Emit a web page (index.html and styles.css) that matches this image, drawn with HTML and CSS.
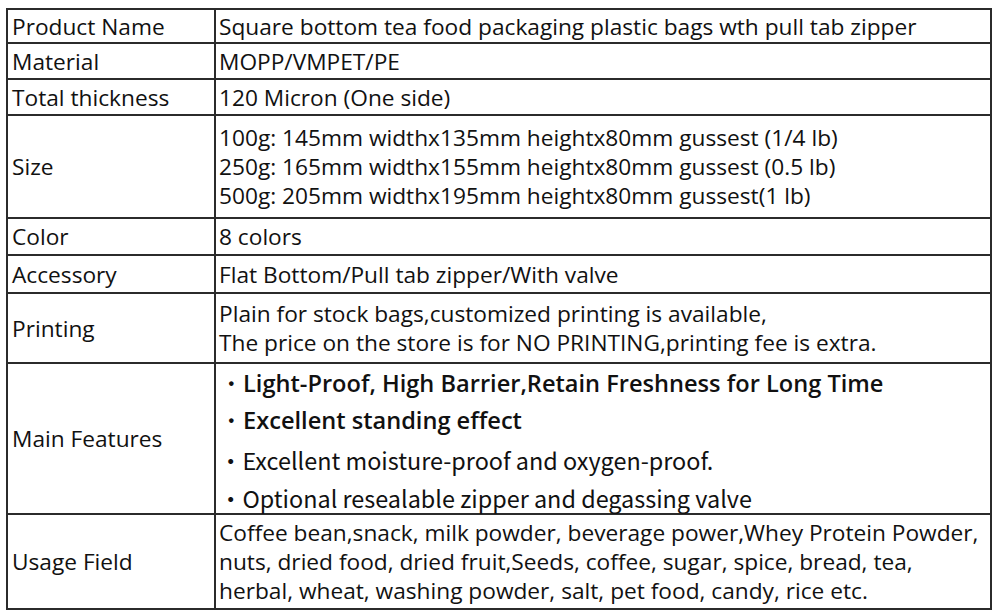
FILE: index.html
```html
<!DOCTYPE html>
<html>
<head>
<meta charset="utf-8">
<link rel="stylesheet" href="styles.css">
</head>
<body>
<div class="wrap">
<table class="spec">
  <colgroup><col class="c1"><col class="c2"></colgroup>
  <tr class="r-name"><td>Product Name</td><td>Square bottom tea food packaging plastic bags wth pull tab zipper</td></tr>
  <tr class="r-mat"><td>Material</td><td>MOPP/VMPET/PE</td></tr>
  <tr class="r-thk"><td>Total thickness</td><td>120 Micron (One side)</td></tr>
  <tr class="r-size"><td>Size</td><td class="multi">100g: 145mm widthx135mm heightx80mm gussest (1/4 lb)<br>250g: 165mm widthx155mm heightx80mm gussest (0.5 lb)<br>500g: 205mm widthx195mm heightx80mm gussest(1 lb)</td></tr>
  <tr class="r-col"><td>Color</td><td>8 colors</td></tr>
  <tr class="r-acc"><td>Accessory</td><td>Flat Bottom/Pull tab zipper/With valve</td></tr>
  <tr class="r-prt"><td>Printing</td><td class="multi">Plain for stock bags,customized printing is available,<br>The price on the store is for NO PRINTING,printing fee is extra.</td></tr>
  <tr class="r-feat"><td>Main Features</td><td class="feats">
    <div class="f bold f1">・Light-Proof, High Barrier,Retain Freshness for Long Time</div>
    <div class="f bold f2">・Excellent standing effect</div>
    <div class="f jp f3">・Excellent moisture-proof and oxygen-proof.</div>
    <div class="f jp f4">・Optional resealable zipper and degassing valve</div>
  </td></tr>
  <tr class="r-use"><td>Usage Field</td><td class="multi">Coffee bean,snack, milk powder, beverage power,Whey Protein Powder,<br>nuts, dried food, dried fruit,Seeds, coffee, sugar, spice, bread, tea,<br>herbal, wheat, washing powder, salt, pet food, candy, rice etc.</td></tr>
</table>
</div>
</body>
</html>
```
FILE: styles.css
```css
html, body { margin: 0; padding: 0; background: #fff; }
.wrap { padding: 8px 0 0 6px; }
.spec {
  border-collapse: collapse;
  width: 986px;
  table-layout: fixed;
  font-family: "Open Sans", "Noto Sans", sans-serif;
  font-size: 22.7px;
  font-weight: 500;
  color: #111;
}
.c1 { width: 208px; }
.spec td {
  border: 2px solid #2b2b2b;
  padding: 0 3px;
  vertical-align: middle;
  line-height: 29px;
  white-space: nowrap;
}
.spec td:first-child { padding-left: 4px; }
.r-name { height: 34px; }
.r-mat { height: 36px; }
.r-thk { height: 36px; }
.r-size { height: 103px; }
.r-col { height: 37px; }
.r-acc { height: 38px; }
.r-prt { height: 70px; }
.r-feat { height: 151px; }
.r-use { height: 95px; }
.spec td.feats { vertical-align: top; padding-top: 6px; padding-bottom: 2px; }
.f { line-height: 26px; font-size: 23.4px; }
.f2 { margin-top: 11px; }
.f3 { margin-top: 14px; }
.f4 { margin-top: 12px; }
.f.bold { font-weight: 600; font-size: 23.6px; }
.f.jp { font-family: "Noto Sans CJK JP", sans-serif; font-weight: 400; }
```
